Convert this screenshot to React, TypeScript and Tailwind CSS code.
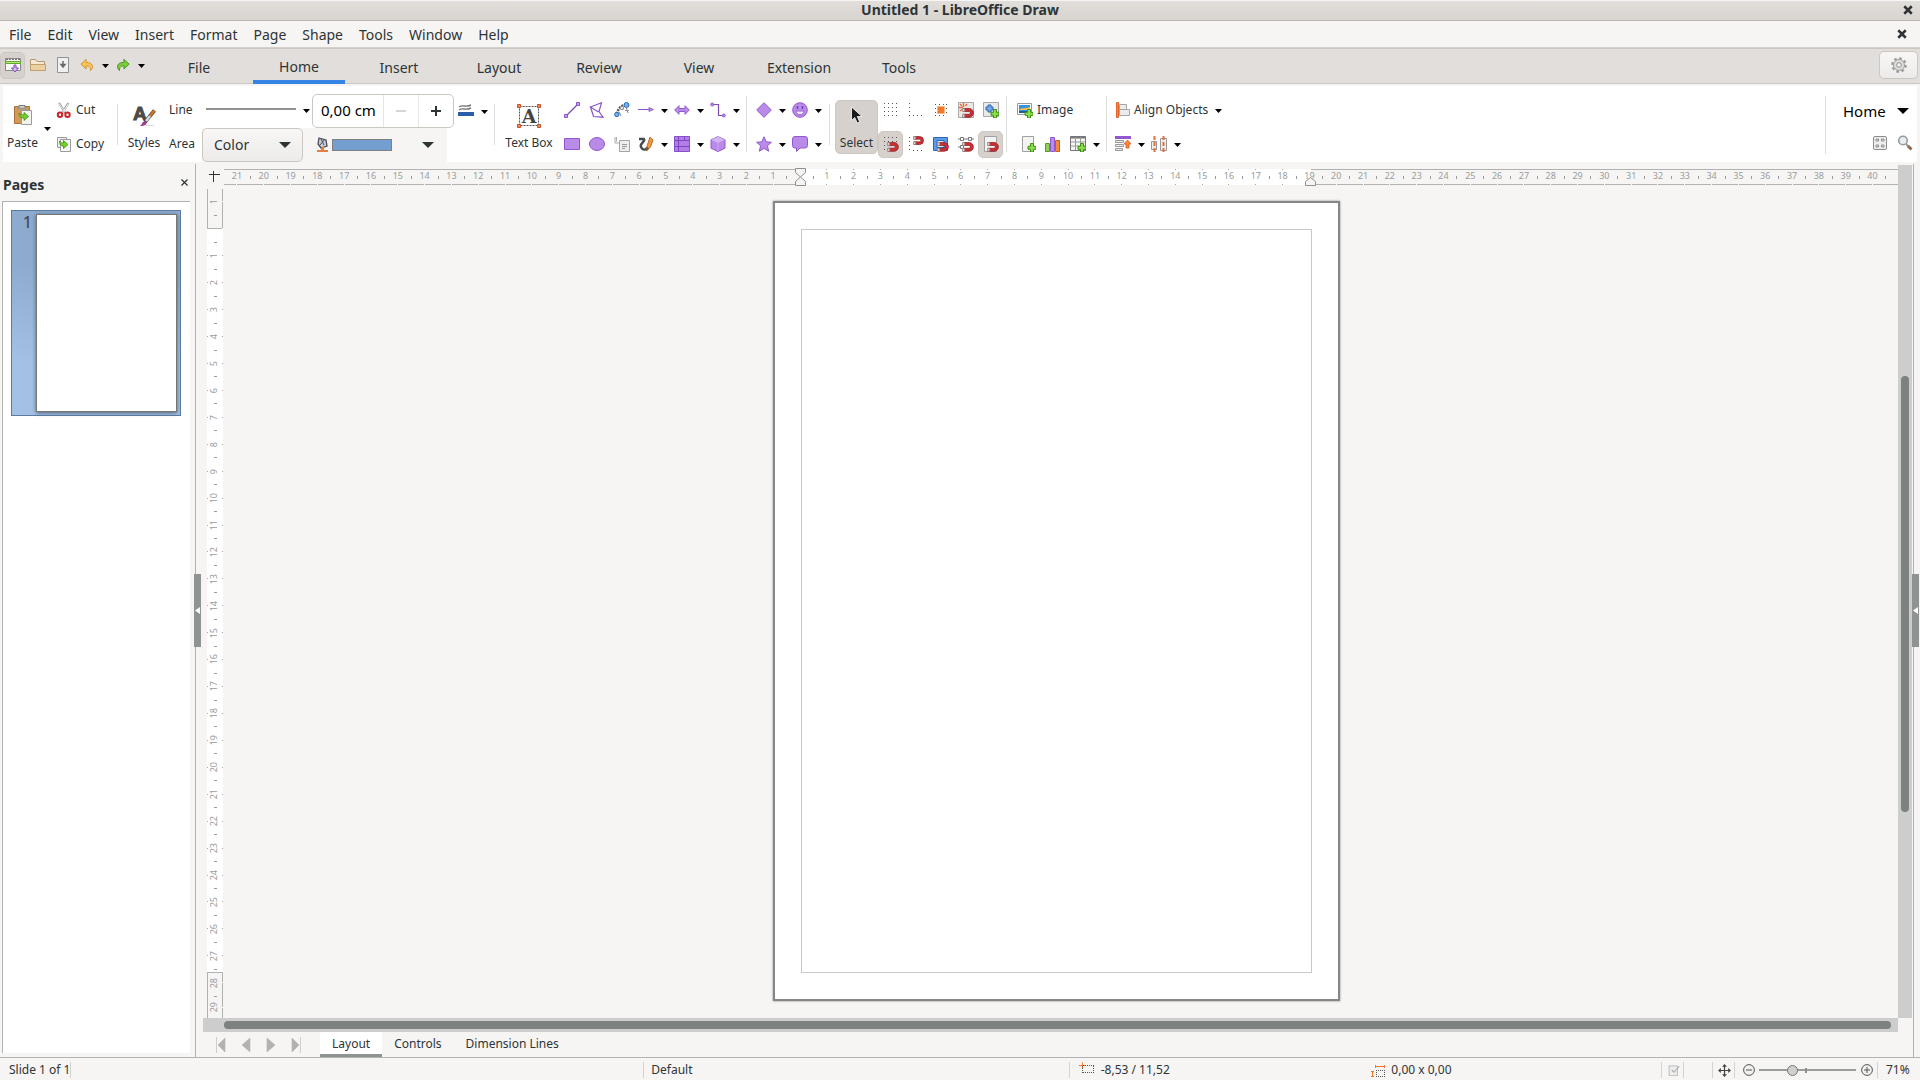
import React from "react";
import clsx from "clsx";

const menus = ["File", "Edit", "View", "Insert", "Format", "Page", "Shape", "Tools", "Window", "Help"];
const tabs = ["File", "Home", "Insert", "Layout", "Review", "View", "Extension", "Tools"];
const sheets = ["Layout", "Controls", "Dimension Lines"];

type Kids = { children?: React.ReactNode };

/* ---------- Shared bits ---------- */

function Icon({ children, size = "size-4" }: Kids & { size?: string }) {
  return (
    <svg className={clsx("shrink-0", size)} viewBox="0 0 16 16" fill="none" aria-hidden="true">
      {children}
    </svg>
  );
}

function Caret({ big = false }: { big?: boolean }) {
  return (
    <svg className={clsx("shrink-0", big ? "w-3 h-[6px]" : "w-[7px] h-1")} viewBox="0 0 12 6" preserveAspectRatio="none" aria-hidden="true">
      <path d="M0 0h12L6 6z" fill="currentColor" />
    </svg>
  );
}

function Drop({ label }: { label: string }) {
  return (
    <button aria-label={label} className="w-3 h-[27px] shrink-0 flex items-center justify-center pt-[2px] text-black">
      <Caret />
    </button>
  );
}

function Tool({ label, pressed, children }: Kids & { label: string; pressed?: boolean }) {
  return (
    <button
      aria-label={label}
      aria-pressed={pressed}
      className={clsx("w-[25px] h-[27px] shrink-0 flex items-center justify-center rounded-[5px]", pressed && "bg-[#d6d1cd] border border-[#cdc7c2]")}
    >
      {children}
    </button>
  );
}

function Split({ label, children }: Kids & { label: string }) {
  return (
    <div className="flex w-9 shrink-0">
      <button aria-label={label} className="w-6 h-[27px] flex items-center justify-center">
        {children}
      </button>
      <Drop label={`${label} options`} />
    </div>
  );
}

function Row({ children }: Kids) {
  return <div className="h-[34px] flex items-center">{children}</div>;
}

function Sep({ tall = false }: { tall?: boolean }) {
  return <div className={clsx("w-px shrink-0 self-center bg-[#dedede]", tall ? "h-14" : "h-[41px]")} />;
}

function BigTool({ label, children, className }: Kids & { label: string; className?: string }) {
  return (
    <button className={clsx("flex flex-col items-center justify-between shrink-0 text-[12px] leading-4", className)}>
      {children}
      <span>{label}</span>
    </button>
  );
}

/* ---------- Icon parts ---------- */

const Magnet = () => (
  <>
    <path d="M5 6.5h6a4.4 4.4 0 0 1 0 8.8H5v-3h6a1.4 1.4 0 0 0 0-2.8H5z" fill="#cb2f33" stroke="#8a1a1e" strokeWidth=".7" />
    <path d="M4.5 6.5h2.2v3H4.5zM4.5 12.3h2.2v3H4.5z" fill="#dcd6d4" stroke="#8b7b7b" strokeWidth=".6" />
  </>
);

const SmallMagnet = () => (
  <>
    <path d="M6 .5h5.5a4 4 0 0 1 0 8H6v-2.7h5.500a1.300 1.300 0 0 0 0-2.600H6z" fill="#cb2f33" stroke="#8a1a1e" strokeWidth=".7" />
    <path d="M5.5.5h2.2v2.700H5.500zM5.500 5.800h2.200v2.700H5.500z" fill="#dcd6d4" stroke="#8b7b7b" strokeWidth=".6" />
  </>
);

const Plus = () => (
  <path d="M10.5 7.500h3v2.800H16v3h-2.500V16h-3v-2.700H8v-3h2.500z" fill="#8ade4e" stroke="#3f8f12" />
);

const purple = { fill: "#b98ae8", stroke: "#9258cf", strokeWidth: 1 };

const PasteIcon = () => (
  <svg className="w-[18px] h-[22px]" viewBox="0 0 18 22" fill="none" aria-hidden="true">
    <path d="M.5 2.500h15v17H.5z" fill="#d19a56" stroke="#a8713a" />
    <path d="M5 1.500h6v3H5z" fill="#d8d8d6" stroke="#777" />
    <path d="M3.500 3.500h9v2h-9z" fill="#999" />
    <path d="M7.500 6.500h10v14h-10z" fill="#f3f3f2" stroke="#9b9b9b" />
    <path d="M5 9c0 4 2 5 5 5v2.500l4.500-4-4.500-4V11C7.500 11 6.500 10.500 5 9z" fill="#74d12c" stroke="#3f8f12" strokeWidth=".8" />
  </svg>
);

const CutIcon = () => (
  <Icon>
    <path d="M3 1l6.500 10M12.500 1L6 11" stroke="#999" strokeWidth="2.200" />
    <path d="M3 1.500l6.500 9M12.500 1.500l-6 9" stroke="#f2f2f2" />
    <circle cx="4" cy="12.700" r="2.200" stroke="#c9252b" strokeWidth="2" />
    <circle cx="11.500" cy="12.700" r="2.200" stroke="#c9252b" strokeWidth="2" />
  </Icon>
);

const CopyIcon = () => (
  <Icon>
    <path d="M1.500 1.500h9v10h-9z" fill="#eee" stroke="#9b9b9b" />
    <path d="M4.500 3.500h10v12h-10z" fill="#f7f7f6" stroke="#9b9b9b" />
    <path d="M3.500 5c0 4 1.500 5 4 5v2.500l4.500-4-4.500-4V7C6 7 4.500 6.500 3.500 5z" fill="#74d12c" stroke="#3f8f12" strokeWidth=".8" />
  </Icon>
);

const StylesIcon = () => (
  <svg className="size-6 overflow-visible" viewBox="0 0 24 24" fill="none" aria-hidden="true">
    <text x="1" y="17" fontSize="19" fontWeight="bold" fontFamily="Liberation Sans, sans-serif" fill="#4a4a4a" stroke="#4a4a4a">A</text>
    <path d="M22.500 7.500L13 19" stroke="#444" strokeWidth="3.600" />
    <path d="M22.500 7.500L18 13" stroke="#d8761a" strokeWidth="2.400" />
    <path d="M18 13l-4 5" stroke="#d9d9d9" strokeWidth="2.600" />
    <path d="M8 23c2-1 2-4 4.500-5 2 .5 2.500 2 1.500 3.500-1.500 1.500-4 1.500-6 1.500z" fill="#a8368f" />
    <path d="M14 22.500h8" stroke="#ddd" />
  </svg>
);

const TextBoxIcon = () => (
  <svg className="size-6 overflow-visible" viewBox="0 0 24 24" fill="none" aria-hidden="true">
    <path d="M2.500 2.500h19v19h-19z" stroke="#555" strokeDasharray="2 1" />
    <text x="12" y="19" fontSize="19" fontWeight="bold" textAnchor="middle" fontFamily="DejaVu Serif, serif" fill="#444">A</text>
    {["M.5.5h3v3h-3z", "M20.500.5h3v3h-3z", "M.5 20.500h3v3h-3z", "M20.500 20.500h3v3h-3z"].map((d) => (
      <path key={d} d={d} fill="#f08a5a" stroke="#c8502a" />
    ))}
  </svg>
);

const Cursor = () => (
  <svg className="w-3 h-[18px]" viewBox="0 0 12 18" aria-hidden="true">
    <path d="M.5 1v13.500l3.200-3 2.600 5.500 2.400-1-2.400-5.500H11z" fill="#1a1a1a" stroke="#fff" strokeWidth=".8" />
  </svg>
);

/* ---------- Ribbon ---------- */

function ShapeTools() {
  return (
    <div className="pt-[7px] ml-[6px]">
      <Row>
        <Tool label="Line">
          <Icon>
            <path d="M2 14L14 2" stroke="#7c4bb5" strokeWidth="1.200" />
            <path d="M.5 12.500h3v3h-3zM12.500.5h3v3h-3z" fill="#c79bef" stroke="#8a55c7" />
          </Icon>
        </Tool>
        <Tool label="Polygon">
          <Icon>
            <path d="M1.500 5L12.500.8 10 9.500l4 5.700-9.500-.7L1.500 5l8 5" stroke="#8a55c7" strokeWidth="1.200" />
          </Icon>
        </Tool>
        <Tool label="Curve">
          <Icon>
            <path d="M3 12c1-6 5-9 9-9" stroke="#555" strokeWidth="2.500" strokeDasharray="2 1" />
            <path d="M6.500 4.500h3v3h-3zM11 8.500h4" stroke="#999" fill="#ddd" />
            <circle cx="12.500" cy="3" r="2.500" fill="#72b0f0" stroke="#2b6cb5" />
            <circle cx="2.800" cy="12.500" r="2.200" fill="#72b0f0" stroke="#2b6cb5" />
            <path d="M5 10l2 4M12 5l2 6" stroke="#888" />
          </Icon>
        </Tool>
        <Split label="Arrows">
          <Icon>
            <path d="M0 7.500h12" stroke="#8a55c7" />
            <path d="M11 5.500l4.500 2-4.500 2z" fill="#b98ae8" stroke="#8a55c7" strokeWidth=".8" />
          </Icon>
        </Split>
        <Split label="Block arrows">
          <Icon>
            <path d="M.7 8L5 3.700v2.800h6V3.700L15.300 8 11 12.300V9.500H5v2.800z" {...purple} />
          </Icon>
        </Split>
        <Split label="Connectors">
          <Icon>
            <path d="M2 2.500h6.500v11H14" stroke="#7c4bb5" strokeWidth="1.200" />
            <circle cx="2.200" cy="2.500" r="1.500" {...purple} />
            <circle cx="13.800" cy="13.500" r="1.500" {...purple} />
          </Icon>
        </Split>
      </Row>
      <Row>
        <Tool label="Rectangle">
          <Icon>
            <path d="M.5 2.500h15v11H.5z" {...purple} />
          </Icon>
        </Tool>
        <Tool label="Ellipse">
          <Icon>
            <ellipse cx="8" cy="8" rx="7.500" ry="6.500" {...purple} />
          </Icon>
        </Tool>
        <Tool label="Callout">
          <Icon>
            <path d="M1 1v6h5M2.500 1v4.500" stroke="#aaa" />
            <path d="M5.500 4.500h10v11h-10z" fill="#eee" stroke="#a5a5a5" />
            <path d="M8 8.500h5M8 10.500h5M8 12.500h3" stroke="#999" />
          </Icon>
        </Tool>
        <Split label="Freeform">
          <Icon>
            <path d="M1 3h5c2 2-5 5-3 8 2 4 6 3 6 0" stroke="#444c52" strokeWidth="2.400" />
            <path d="M15 4l-3-3-3 9-.5 5 4-4z" fill="#f4973a" stroke="#a65f1c" strokeWidth=".8" />
            <path d="M9 11l-.5 4 2.500-2.500z" fill="#555" />
          </Icon>
        </Split>
        <Split label="Table">
          <Icon>
            <path d="M.5.5h15v15H.5z" fill="#b27ee6" stroke="#8a4fcb" />
            <path d="M4.500 1v14M1 4.500h14M10.500 1v3M1 10.500h3M5 10.500h10" stroke="#7f45c0" />
          </Icon>
        </Split>
        <Split label="3D objects">
          <Icon>
            <path d="M8 .7l7 3v8.500l-7 3.300-7-3.300V3.700z" {...purple} />
            <path d="M8 .7l7 3L8 7 1 3.700z" fill="#d3b4f3" />
            <path d="M8 7v8" stroke="#cda9f2" />
          </Icon>
        </Split>
      </Row>
    </div>
  );
}

function BasicShapes() {
  return (
    <div className="pt-[7px] ml-[5px]">
      <Row>
        <Split label="Basic shapes">
          <Icon>
            <path d="M8 .7L15.300 8 8 15.300.7 8z" {...purple} />
          </Icon>
        </Split>
        <Split label="Symbols">
          <Icon>
            <circle cx="8" cy="8" r="7.300" {...purple} />
            <path d="M4 9h8c0 5-8 5-8 0z" fill="#f0e4fb" stroke="#8a55c7" strokeWidth=".8" />
            <path d="M5.500 4v3M10.500 4v3" stroke="#7440ad" strokeWidth="1.500" />
          </Icon>
        </Split>
      </Row>
      <Row>
        <Split label="Stars">
          <Icon>
            <path d="M8 .8l2.200 5 5.200.5-4 3.500 1.300 5.400L8 12.400l-4.700 2.800 1.300-5.400-4-3.500 5.200-.5z" {...purple} />
          </Icon>
        </Split>
        <Split label="Callout shapes">
          <Icon>
            <path d="M3 .5h10a2.500 2.500 0 0 1 2.500 2.500v6.500a2.500 2.500 0 0 1-2.500 2.500H8l-3.500 3.500V12H3A2.500 2.500 0 0 1 .5 9.500V3A2.500 2.500 0 0 1 3 .5z" {...purple} />
          </Icon>
        </Split>
      </Row>
    </div>
  );
}

function SnapTools() {
  return (
    <div className="pt-[7px]">
      <Row>
        <Tool label="Display grid">
          <Icon>
            <path d="M1 1.500h14M1 5.500h14M1 9.500h14M1 13.500h14" stroke="#555" strokeDasharray="1 3" />
          </Icon>
        </Tool>
        <Tool label="Helplines">
          <Icon>
            <path d="M1.500 1v14M5 13.500h10" stroke="#555" strokeDasharray="1 3" />
          </Icon>
        </Tool>
        <Tool label="Helplines while moving">
          <Icon>
            <path d="M2.500 2v12M13.500 2v12M2 2.500h12M2 13.500h12" stroke="#555" strokeDasharray="1 3" />
            <path d="M4.500 4.500h7v7h-7z" fill="#ef7a2c" stroke="#f7b27f" />
          </Icon>
        </Tool>
        <Tool label="Snap to object">
          <Icon>
            <path d="M.5.5h15v15H.5z" fill="#e9e9e8" stroke="#a9a9a9" />
            <path d="M5.500 1v4M1 5.500h4M2 2l2 2M9 2L7.500 4M2 9l2-1.500" stroke="#e96f3a" strokeWidth="1.400" />
            <Magnet />
          </Icon>
        </Tool>
        <Tool label="Glue points">
          <Icon>
            <path d="M.5.5h15v14H.5z" fill="#e9e9e8" stroke="#a9a9a9" />
            <path d="M5 3h3v2h2v3H8v2H5V8H3V5h2z" fill="#72a9ea" stroke="#2f67ad" />
            <Plus />
          </Icon>
        </Tool>
      </Row>
      <Row>
        <Tool label="Snap to grid" pressed>
          <Icon>
            <path d="M1 1.500h14M1 5.500h14M1 9.500h5M1 13.500h5" stroke="#555" strokeDasharray="1 3" />
            <Magnet />
          </Icon>
        </Tool>
        <Tool label="Snap to helplines">
          <Icon>
            <path d="M1.500 1v14M5 14.500h10" stroke="#555" strokeDasharray="1 3" />
            <SmallMagnet />
          </Icon>
        </Tool>
        <Tool label="Snap to border">
          <Icon>
            <path d="M.5 1.500h14v13H.5z" fill="#5b9bea" stroke="#2d66b3" />
            <path d="M4 4.500h7v7H4z" fill="#dcebfb" stroke="#2d66b3" />
            <Magnet />
          </Icon>
        </Tool>
        <Tool label="Snap to points">
          <Icon>
            <path d="M2.500 1.500h3v3h-3zM10.500 1.500h3v3h-3zM2.500 9.500h3v3h-3z" stroke="#777" />
            <path d="M0 3h2M6 3h4M14 3h2M0 11h2" stroke="#777" />
            <Magnet />
          </Icon>
        </Tool>
        <Tool label="Snap to page" pressed>
          <Icon>
            <path d="M1.500.5h12v15h-12z" fill="#f3f3f2" stroke="#a0a0a0" />
            <Magnet />
          </Icon>
        </Tool>
      </Row>
    </div>
  );
}

function InsertTools() {
  return (
    <div className="pt-[7px] ml-2">
      <Row>
        <button className="flex items-center gap-1 pl-[2px] text-[12px] leading-4">
          <Icon>
            <path d="M.5 1.500h14v11H.5z" fill="#fff" stroke="#999" />
            <path d="M2 3h11v8H2z" fill="#3b93da" />
            <path d="M2 8c3-3 6-1 11-3v3z" fill="#f6c04a" />
            <path d="M2 9h11v2H2z" fill="#1c5f96" />
            <Plus />
          </Icon>
          Image
        </button>
      </Row>
      <Row>
        <Tool label="Insert page">
          <Icon>
            <path d="M2.500.5h11v15h-11z" fill="#f3f3f2" stroke="#a0a0a0" />
            <Plus />
          </Icon>
        </Tool>
        <Tool label="Insert chart">
          <Icon>
            <path d="M.5 7.500h4v8h-4z" fill="#8fd35a" stroke="#4f9a22" />
            <path d="M5.500 1.500h4v14h-4z" fill="#b98ae8" stroke="#9258cf" />
            <path d="M10.500 4.500h4v11h-4z" fill="#f58a3c" stroke="#c85f1b" />
          </Icon>
        </Tool>
        <Tool label="Insert table">
          <Icon>
            <path d="M.5.5h15v14H.5z" fill="#f6f6f6" stroke="#777" />
            <path d="M.5 1.500h15" stroke="#777" strokeWidth="2" />
            <path d="M1 6h14M1 10h14M5.500 1v13M10.500 1v13" stroke="#999" />
            <Plus />
          </Icon>
        </Tool>
        <Drop label="Table options" />
      </Row>
    </div>
  );
}

function AlignTools() {
  return (
    <div className="pt-[7px] ml-1">
      <Row>
        <button className="flex items-center gap-[3px] pl-1 text-[12px] leading-4 whitespace-nowrap">
          <Icon>
            <path d="M1.500.5h2v15h-2z" fill="#f58a3c" stroke="#e0652a" />
            <path d="M4.500 2.500h7v5h-7zM4.500 7.500h10v6h-10z" fill="#ececeb" stroke="#a5a5a5" />
          </Icon>
          Align Objects
        </button>
        <span className="ml-1">
          <Drop label="Align options" />
        </span>
      </Row>
      <Row>
        <Split label="Arrange">
          <Icon>
            <path d="M0 1.500h16" stroke="#9158d0" strokeWidth="3" />
            <path d="M.5 4.500h8v2h-8zM.5 8.500h8v2h-8zM.5 12.500h7v2h-7z" fill="#eee" stroke="#999" />
            <path d="M12.500 4L16 8h-2v4h-3V8H9z" fill="#f58a3c" stroke="#d85b21" strokeWidth=".8" />
          </Icon>
        </Split>
        <Split label="Distribute">
          <Icon>
            <path d="M.5 5.500h5v8h-5zM9.500 2.500h6v12h-6z" fill="#eee" stroke="#999" />
            <path d="M3.500 0v16M12.500 0v16" stroke="#e56f34" strokeWidth="2" strokeDasharray="4 2" />
          </Icon>
        </Split>
      </Row>
    </div>
  );
}

function LineAndArea() {
  return (
    <>
      <div className="flex flex-col pt-[7px] ml-2 text-[12px] w-[33px]">
        <label htmlFor="line-width" className="h-[34px] flex items-center">Line</label>
        <label htmlFor="area-fill" className="h-[34px] flex items-center">Area</label>
      </div>
      <div className="pt-2">
        <div className="h-[34px] flex items-start">
          <button aria-label="Line style" className="w-[98px] h-[33px] flex items-center justify-center">
            <span className="w-[90px] h-[2px] bg-[#8e9292] mb-[3px]" />
          </button>
          <div className="pt-[2px]">
            <Drop label="Line style options" />
          </div>
          <div className="w-[142px] h-[34px] flex rounded-[5px] border border-[#cdc7c2] bg-white overflow-hidden">
            <input id="line-width" defaultValue="0,00 cm" className="w-[70px] pl-2 pb-[2px] text-[15px] text-black outline-none" />
            <button aria-label="Decrease width" disabled className="w-[35px] border-l border-[#e8e6e3] flex items-center justify-center">
              <span className="w-[10px] h-[2px] bg-[#d5d5d3]" />
            </button>
            <button aria-label="Increase width" className="flex-1 border-l border-[#e8e6e3] flex items-center justify-center">
              <svg className="size-[10px]" viewBox="0 0 10 10" aria-hidden="true">
                <path d="M0 5h10M5 0v10" stroke="#2e3436" strokeWidth="2" />
              </svg>
            </button>
          </div>
          <div className="flex pt-[3px]">
            <Split label="Line color">
              <Icon>
                <path d="M1 4c4-3 6 1 12-2M1 7c4-3 6 1 12-2" stroke="#777" strokeWidth="1.400" />
                <path d="M0 9h16v4H0z" fill="#2a5ea8" />
              </Icon>
            </Split>
          </div>
        </div>
        <div className="h-[34px] w-[245px] flex bg-[#f6f5f4]">
          <div className="relative w-[101px]">
            <select
              id="area-fill"
              className="appearance-none w-full h-[34px] pl-[11px] pb-[2px] text-[14px] rounded-[5px] border border-[#cdc7c2] bg-linear-to-b from-[#f8f7f6] to-[#edebe9]"
            >
              <option>Color</option>
            </select>
            <span className="absolute right-3 top-[14px] pointer-events-none">
              <Caret big />
            </span>
          </div>
          <button aria-label="Fill color" className="flex-1 flex items-center pl-[13px] pr-[13px]">
            <Icon>
              <path d="M3 1l7 2 1 6-6 2-3-4z" fill="#c9ccd2" stroke="#4a4d58" strokeWidth="1.300" />
              <path d="M5 2l3 6M9 2L4 8" stroke="#4a4d58" />
              <path d="M6 10h2v3h4v2H1v-2h4z" fill="#e97b45" />
            </Icon>
            <span className="w-[60px] h-3 bg-[#729fcf] border border-[#7f8080]" />
            <span className="ml-auto">
              <Caret big />
            </span>
          </button>
        </div>
      </div>
    </>
  );
}

function Ribbon() {
  return (
    <div className="mx-[3px] mt-[2px] h-19 bg-white flex shrink-0">
      <div className="flex items-center pl-1">
        <BigTool label="Paste" className="w-[31px] h-[54px] pt-[7px]">
          <PasteIcon />
        </BigTool>
        <div className="mt-2 ml-[3px]">
          <Drop label="Paste options" />
        </div>
      </div>
      <div className="pt-[7px] ml-[3px] w-[61px] text-[12px] leading-4">
        <Row>
          <button className="flex items-center gap-1"><CutIcon />Cut</button>
        </Row>
        <Row>
          <button className="flex items-center gap-1"><CopyIcon />Copy</button>
        </Row>
      </div>
      <Sep />
      <div className="flex items-center ml-[9px]">
        <BigTool label="Styles" className="w-[34px] h-[54px] pt-[6px]">
          <StylesIcon />
        </BigTool>
      </div>
      <LineAndArea />
      <div className="w-1" />
      <Sep />
      <div className="flex items-center ml-[10px]">
        <BigTool label="Text Box" className="w-12 h-[54px] pt-[7px] whitespace-nowrap">
          <TextBoxIcon />
        </BigTool>
      </div>
      <ShapeTools />
      <div className="w-1" />
      <Sep tall />
      <BasicShapes />
      <div className="w-[5px]" />
      <Sep />
      <div className="flex items-center ml-[5px] mt-[6px]">
        <BigTool label="Select" className="w-[43px] h-[54px] pt-[5px] pb-[2px] rounded-[5px] bg-[#d6d1cd] border border-[#cdc7c2]">
          <Cursor />
        </BigTool>
      </div>
      <SnapTools />
      <div className="w-[3px]" />
      <Sep tall />
      <InsertTools />
      <div className="w-1" />
      <Sep tall />
      <AlignTools />

      <div className="ml-auto w-[92px] mb-2 mt-[10px] border-l border-[#dedede]">
        <button className="w-full h-[30px] pl-[17px] pr-2 flex items-center justify-between text-[15px] text-black">
          Home
          <Caret big />
        </button>
        <div className="flex justify-end gap-[9px] pr-1 pt-[9px]">
          <button aria-label="Fit page">
            <Icon>
              <rect x="1.500" y="1.500" width="13" height="13" rx="1.500" fill="#eee" stroke="#8b8b8b" />
              <path d="M4 4h2.500v2H4zM9.500 4H12v2H9.500zM4 10h2.500v2H4zM9.500 10H12v2H9.500z" stroke="#8b8b8b" />
            </Icon>
          </button>
          <button aria-label="Find">
            <Icon>
              <circle cx="6" cy="5.500" r="4.300" fill="#e9eef4" stroke="#999" strokeWidth="1.600" />
              <path d="M9 9l2.500 2.500" stroke="#999" strokeWidth="2" />
              <path d="M11 11l3.500 3.500" stroke="#8f6a52" strokeWidth="3" />
            </Icon>
          </button>
        </div>
      </div>
    </div>
  );
}

function QuickBar() {
  return (
    <div className="flex items-center w-[153px]">
      <Tool label="Toolbar mode" pressed>
        <Icon>
          <path d="M.5 1.500h15v12H.5z" fill="#fafafa" stroke="#888" />
          <path d="M1 2.500h14" stroke="#777" strokeDasharray="2 1" />
          <path d="M.5 4.500h15v2H.5z" fill="#b7ec7b" stroke="#62a82c" />
          <path d="M9 8h2v3h2.500L10 15l-3.500-4H9z" fill="#d9bdf5" stroke="#7c4bb5" />
        </Icon>
      </Tool>
      <Tool label="Open">
        <Icon>
          <path d="M.5 13.500v-11h5l1.500 2h7.500v9z" fill="#f5e8d3" stroke="#b39a74" />
          <path d="M.5 7.500h15v6H.5z" fill="#ecd0a2" stroke="#c1a070" />
        </Icon>
      </Tool>
      <Tool label="Save">
        <Icon>
          <path d="M2.500.5h11v15h-11z" fill="#eef0f2" stroke="#8f9396" />
          <path d="M8 4v4M6 7.500h4L8 10z" fill="#666b70" stroke="#666b70" strokeWidth="1.500" />
        </Icon>
      </Tool>
      <Split label="Undo">
        <Icon size="size-[14px]">
          <path d="M7 1.500L1 7l6 5.500V9c4-.5 5 2 5 5.500 4-4 3-9.500-5-9.500z" fill="#f9c45a" stroke="#d08e1f" />
        </Icon>
      </Split>
      <Split label="Redo">
        <Icon size="size-[14px]">
          <path d="M9 1.500L15 7l-6 5.500V9c-4-.5-5 2-5 5.500C0 10.500 1 5 9 5z" fill="#7ecb3c" stroke="#3f8f12" />
        </Icon>
      </Split>
    </div>
  );
}

/* ---------- Rulers ---------- */

function HRuler() {
  const cells = Array.from({ length: 62 }, (_, i) => i - 21);
  return (
    <div className="relative flex-1 h-4 mt-[7px]">
      <div className="absolute inset-0 flex">
        <div className="w-[576px] border-y border-[#b2b2b0]" />
        <div className="w-[511px] bg-white" />
        <div className="flex-1 border-y border-[#b2b2b0]" />
      </div>
      <div className="absolute inset-0 flex text-[9px] leading-[12px] text-[#9a9c9b]">
        {cells.map((n) => {
          const onPage = n > 0 && n < 19;
          return (
            <div key={n} className="flex-[100] basis-0 min-w-0 flex items-center">
              <div className="flex-1 min-w-0 flex flex-col items-center">
                <span className={clsx("w-px h-px", onPage && "bg-[#a5a7a6]")} />
                <span className="h-[14px]">{n === 0 ? "" : Math.abs(n)}</span>
                <span className={clsx("w-px h-px", onPage ? "bg-[#a5a7a6]" : "bg-white")} />
              </div>
              <span className="w-px h-[3px] bg-[#9a9c9b]" />
            </div>
          );
        })}
        <div className="flex-[42] basis-0" />
      </div>
      <svg className="absolute left-[571px] top-[-1px] w-[11px] h-[18px]" viewBox="0 0 11 18" fill="#f6f5f4" stroke="#8e9192" aria-hidden="true">
        <path d="M.5.5h10v4L5.500 9 .5 4.500z" />
        <path d="M.5 17.500h10v-4L5.500 9l-5 4.500z" />
      </svg>
      <svg className="absolute left-[1081px] top-2 w-[11px] h-[9px]" viewBox="0 0 11 9" fill="#f6f5f4" stroke="#8e9192" aria-hidden="true">
        <path d="M.5 8.500h10v-4L5.500.5l-5 4z" />
      </svg>
    </div>
  );
}

function VRuler() {
  const cells = Array.from({ length: 31 }, (_, i) => i - 1);
  return (
    <div className="relative w-4 ml-1 mt-1 shrink-0 overflow-hidden">
      <div className="absolute inset-0 flex flex-col">
        <div className="h-10 border border-t-0 border-[#b2b2b0]" />
        <div className="h-[743px] bg-white" />
        <div className="flex-1 border border-b-0 border-[#b2b2b0]" />
      </div>
      <div className="absolute inset-0 flex flex-col text-[9px] text-[#9a9c9b]">
        {cells.map((n) => {
          const onPage = n > 0 && n < 28;
          return (
            <div key={n} className={clsx("basis-0 min-h-0 flex flex-col items-center", n === 29 ? "flex-[80]" : "flex-[100]")}>
              <div className="flex-1 w-full min-h-0 flex items-center justify-between">
                <span className={clsx("w-px h-px", onPage && "bg-[#a5a7a6]")} />
                <span className="w-[14px] [writing-mode:vertical-rl] rotate-180 leading-[12px]">{n === 0 ? "" : Math.abs(n)}</span>
                <span className={clsx("w-px h-px", onPage ? "bg-[#a5a7a6]" : "bg-white")} />
              </div>
              {n < 29 && <span className="h-px w-[3px] bg-[#9a9c9b]" />}
            </div>
          );
        })}
      </div>
    </div>
  );
}

/* ---------- Work area ---------- */

function Grip({ label, className }: { label: string; className?: string }) {
  return (
    <div className={clsx("flex flex-col shrink-0", className)}>
      <div className="flex-1 ml-px border-l border-[#b2b2b0]" />
      <button aria-label={label} className="w-[7px] h-[73px] bg-[#8f9394] flex items-center justify-center">
        <svg className="w-[5px] h-[7px]" viewBox="0 0 5 7" aria-hidden="true">
          <path d="M5 0v7L0 3.500z" fill="#fff" />
        </svg>
      </button>
      <div className="flex-1 ml-px border-l border-[#b2b2b0]" />
    </div>
  );
}

function PagesPanel() {
  return (
    <aside className="w-[190px] shrink-0 flex flex-col">
      <div className="h-[39px] pl-[3px] pr-[2px] flex items-center justify-between">
        <h2 className="text-[14px] font-bold pt-[6px]">Pages</h2>
        <button aria-label="Close pages panel" className="pt-[2px]">
          <svg className="size-[7px]" viewBox="0 0 7 7" aria-hidden="true">
            <path d="M.5.5l6 6M6.500.5l-6 6" stroke="#2e3436" strokeWidth="1.200" />
          </svg>
        </button>
      </div>
      <div className="flex-1 ml-[2px] mb-1 pt-2 pl-2 bg-white border-t border-l border-[#b2b2b0]">
        <button className="w-[170px] h-[206px] p-[3px] flex items-start justify-end border border-[#5b7ba0] bg-linear-to-b from-[#8eabcf] from-25% to-[#a4c1e5] to-75%">
          <span className="w-[21px] text-[16px] leading-4 font-medium text-right pr-1 text-[#454b52]">1</span>
          <span className="w-[141px] h-[198px] bg-white border border-[#777671] shadow-[0_1px_4px_#4b5f7a]" />
        </button>
      </div>
    </aside>
  );
}

function SheetTabs() {
  const arrows = [
    ["First page", "M1.500 0v16M10 1v14L3 8z"],
    ["Previous page", "M10 1v14L2 8z"],
    ["Next page", "M2 1v14l8-7z"],
    ["Last page", "M10.500 0v16M2 1v14l7-7z"],
  ];
  return (
    <div className="h-[25px] flex items-stretch text-[12px]">
      <div className="flex items-center gap-[13px] pl-3 w-[117px]">
        {arrows.map(([label, d]) => (
          <button key={label} aria-label={label}>
            <svg className="w-3 h-4" viewBox="0 0 12 16" fill="#b2b2b0" stroke="#b2b2b0" strokeWidth=".6" aria-hidden="true">
              <path d={d} />
            </svg>
          </button>
        ))}
      </div>
      {sheets.map((name, i) => (
        <button
          key={name}
          className={clsx("px-3 pt-[2px] border-b-3 whitespace-nowrap", i === 0 ? "bg-white border-[#8f9394]" : "border-transparent")}
        >
          {name}
        </button>
      ))}
    </div>
  );
}

function WorkArea() {
  return (
    <main className="flex-1 flex min-h-0">
      <PagesPanel />
      <Grip label="Resize pages panel" className="w-[13px] pl-1 pt-[2px]" />
      <div className="flex-1 min-w-0 flex flex-col">
        <div className="flex">
          <div className="w-[21px] pl-[6px] pt-[9px]">
            <svg className="size-[11px]" viewBox="0 0 11 11" aria-hidden="true">
              <path d="M0 3.500h11M4.500 0v11" stroke="#2e3436" />
            </svg>
          </div>
          <HRuler />
        </div>
        <div className="flex-1 flex min-h-0">
          <VRuler />
          <div className="flex-1 flex justify-center items-start pt-4 pr-2">
            <div className="w-[567px] h-[800px] shrink-0 p-[26px] bg-white border-2 border-[#858688] shadow-[0_0_2px_#888]">
              <div className="h-full border border-[#c8c8c8]" />
            </div>
          </div>
        </div>
        <div className="h-[14px] shrink-0 bg-[#cdcdcd] py-[3px] pl-[21px] pr-[7px]">
          <div className="h-2 rounded-full bg-[#7d8180]" />
        </div>
        <SheetTabs />
      </div>
      <div className="w-[14px] mt-[3px] mb-[39px] px-[3px] flex flex-col bg-[#cdcdcd]">
        <div className="flex-[211]" />
        <div className="flex-[436] rounded-full bg-[#7d8180]" />
        <div className="flex-[206]" />
      </div>
      <Grip label="Show sidebar" className="w-2 pt-[2px]" />
    </main>
  );
}

function StatusSep() {
  return <span className="w-px h-4 bg-[#d5d3d0] shrink-0" />;
}

function StatusBar() {
  return (
    <footer className="h-[23px] shrink-0 border-t border-[#b2b2b0] flex items-center text-[12px] leading-4 pt-[2px] pr-3">
      <span className="w-[70px] pl-[9px] whitespace-nowrap">Slide 1 of 1</span>
      <StatusSep />
      <span className="flex-[573]" />
      <StatusSep />
      <span className="flex-[418] pl-[7px]">Default</span>
      <StatusSep />
      <span className="flex-[293] flex items-center gap-[6px] pl-[9px]">
        <Icon>
          <path d="M3.500.5v6M0 3.500h7" stroke="#f0782e" />
          <path d="M3.500 4v7M14.500 4v7M4 3.500h11M4 10.500h11" stroke="#555" strokeDasharray="1 1" />
        </Icon>
        -8,53 / 11,52
      </span>
      <span className="flex-[290] flex items-center gap-1">
        <Icon>
          <path d="M4.500 4.500h9M4.500 3v3M13.500 3v3M1.500 9v6M0 9.500h3M0 14.500h3" stroke="#f0782e" />
          <path d="M5.500 8v7M13.500 8v7M5 8.500h9M5 14.500h9" stroke="#555" strokeDasharray="1 1" />
        </Icon>
        0,00 x 0,00
      </span>
      <StatusSep />
      <button aria-label="Document modified" className="w-[21px] flex justify-center pl-1">
        <Icon size="size-3">
          <path d="M1.500 2.500h11v13h-11z" fill="#eee" stroke="#aaa" />
          <path d="M5 8l3 3 7-8" stroke="#aaa" strokeWidth="1.500" />
        </Icon>
      </button>
      <StatusSep />
      <span className="w-7" />
      <StatusSep />
      <button aria-label="Fit to window" className="w-[21px] flex justify-center pl-[2px]">
        <Icon size="size-[13px]">
          <path d="M8 2v12M2 8h12" stroke="#444" strokeWidth="1.500" />
          <path d="M8 0l3 3.500H5zM8 16l3-3.500H5zM0 8l3.500-3v6zM16 8l-3.500-3v6z" fill="#444" />
        </Icon>
      </button>
      <StatusSep />
      <button aria-label="Zoom out" className="ml-2">
        <svg className="size-3" viewBox="0 0 12 12" fill="#f1f1f0" stroke="#555" aria-hidden="true">
          <circle cx="6" cy="6" r="5.400" />
          <path d="M3 6h6" />
        </svg>
      </button>
      <span className="relative w-[97px] ml-1 mr-[5px] flex items-center">
        <input
          type="range"
          aria-label="Zoom"
          min="0"
          max="100"
          defaultValue="32"
          className="appearance-none w-full h-[2px] bg-[#9a9c9b] [&::-webkit-slider-thumb]:appearance-none [&::-webkit-slider-thumb]:size-[11px] [&::-webkit-slider-thumb]:rounded-full [&::-webkit-slider-thumb]:border [&::-webkit-slider-thumb]:border-[#777] [&::-webkit-slider-thumb]:bg-[#cfcfcd]"
        />
        <span className="absolute left-1/2 -ml-[2px] w-[2px] h-[5px] bg-[#8e9192]" />
      </span>
      <button aria-label="Zoom in">
        <svg className="size-3" viewBox="0 0 12 12" fill="#f1f1f0" stroke="#555" aria-hidden="true">
          <circle cx="6" cy="6" r="5.400" />
          <path d="M3 6h6M6 3v6" />
        </svg>
      </button>
      <span className="w-1" />
      <StatusSep />
      <span className="pl-2 w-[30px]">71%</span>
    </footer>
  );
}

function CloseX() {
  return (
    <svg className="size-[10px]" viewBox="0 0 8 8" aria-hidden="true">
      <path d="M1 1l6 6M7 1L1 7" stroke="#2e3436" strokeWidth="2" />
    </svg>
  );
}

export default function App() {
  return (
    <div className="h-screen flex flex-col overflow-hidden bg-[#f6f5f4] text-[#2e3436] font-['Noto_Sans',sans-serif]">
      {/* Title bar */}
      <header className="h-[21px] shrink-0 relative flex items-center justify-center pb-[2px] bg-linear-to-b from-[#e1dedb] to-[#d8d4d0] border-t border-t-[#f6f5f4] border-b border-b-[#bfb8b1]">
        <h1 className="text-[14px] leading-4 font-bold">Untitled 1 - LibreOffice Draw</h1>
        <button aria-label="Close window" className="absolute right-[7px] top-1"><CloseX /></button>
      </header>

      {/* Menu bar */}
      <nav className="h-[27px] shrink-0 flex items-center gap-4 pl-[9px] pr-[13px] text-[14px] border-b border-[#d5d0cc]">
        {menus.map((m) => (
          <button key={m}>{m}</button>
        ))}
        <button aria-label="Close document" className="ml-auto"><CloseX /></button>
      </nav>

      {/* Notebook tabs */}
      <div className="h-9 shrink-0 flex bg-[#e1dedb] border-y border-[#cdc7c2]">
        <div className="flex pb-[2px]">
          <QuickBar />
        </div>
        <div className="flex gap-2 text-[14px]">
          {tabs.map((t) => (
            <button key={t} className={clsx("w-[92px] pt-[3px]", t === "Home" && "border-b-4 border-[#3584e4] -mb-px")}>
              {t}
            </button>
          ))}
        </div>
        <button aria-label="Settings" className="ml-auto mr-[2px] mt-[2px] w-[39px] h-7 rounded-[5px] border border-[#cdc7c2] bg-linear-to-b from-[#f8f7f6] to-[#edebe9] flex items-center justify-center">
          <Icon>
            <circle cx="8" cy="8" r="6.600" stroke="#999" strokeWidth="2.400" strokeDasharray="2.600 2.580" />
            <circle cx="8" cy="8" r="5.500" fill="#dcdcdb" stroke="#a0a0a0" />
            <circle cx="8" cy="8" r="2.300" fill="#f4f4f3" stroke="#8f8f8f" />
          </Icon>
        </button>
      </div>

      <Ribbon />
      <WorkArea />
      <StatusBar />
    </div>
  );
}
